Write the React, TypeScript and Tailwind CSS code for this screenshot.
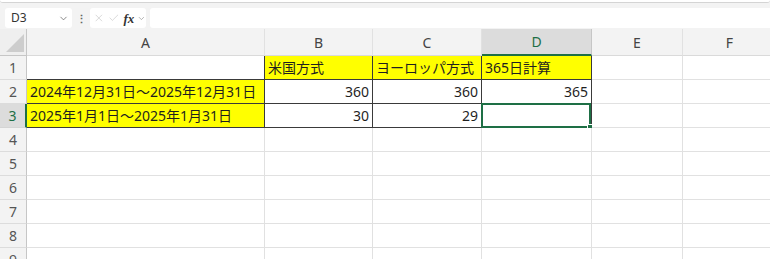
import { Check, ChevronDown, X } from 'lucide-react';

const cols = ['A', 'B', 'C', 'D', 'E', 'F'];
const rows = [1, 2, 3, 4, 5, 6, 7, 8, 9];

type Cell = { text?: string; yellow?: boolean; boxed?: boolean; right?: boolean };

// sheet data keyed by "row-col"
const cells: Record<string, Cell> = {
  '1-B': { text: '米国方式', yellow: true, boxed: true },
  '1-C': { text: 'ヨーロッパ方式', yellow: true, boxed: true },
  '1-D': { text: '365日計算', yellow: true, boxed: true },
  '2-A': { text: '2024年12月31日～2025年12月31日', yellow: true, boxed: true },
  '2-B': { text: '360', boxed: true, right: true },
  '2-C': { text: '360', boxed: true, right: true },
  '2-D': { text: '365', boxed: true, right: true },
  '3-A': { text: '2025年1月1日～2025年1月31日', yellow: true, boxed: true },
  '3-B': { text: '30', boxed: true, right: true },
  '3-C': { text: '29', boxed: true, right: true },
  '3-D': { boxed: true },
};

function SheetCell({ r, c }: { r: number; c: string }) {
  const cell = cells[`${r}-${c}`] ?? {};
  // A1 carries the top edge of A2 and the left edge of B1
  const a1 = r === 1 && c === 'A';
  const black = cell.boxed || a1;
  const selected = r === 3 && c === 'D';
  return (
    <div
      className={`relative flex items-end whitespace-nowrap border-r border-b px-[3px] pb-[2px] text-[14px] leading-[18px] text-[#1f1f1f] ${
        cell.yellow ? 'bg-[#ffff00]' : 'bg-white'
      } ${black ? 'border-[#3a3a3a]' : 'border-[#e1e1e1]'} ${cell.right ? 'justify-end' : 'justify-start'}`}
    >
      {cell.text}
      {selected && (
        <div className="pointer-events-none absolute -left-[1px] -top-[1px] h-[25px] w-[110px] border-2 border-[#1e6f45]">
          <div className="absolute -bottom-[4px] -right-[4px] h-[6px] w-[6px] border border-white bg-[#1e6f45]" />
        </div>
      )}
    </div>
  );
}

export default function App() {
  return (
    <div
      className="h-[259px] w-[770px] overflow-hidden bg-white"
      style={{ fontFamily: '"Noto Sans", "Noto Sans CJK JP", sans-serif' }}
    >
      {/* formula bar */}
      <div className="bg-[#f3f3f3]">
        <div className="h-[3px] rounded-b-md border-b border-[#d4d4d4] bg-white" />
        <div className="flex h-[26px] items-start gap-[4px] pl-[5px] pt-[5px]">
          <div className="flex h-[20px] w-[67px] items-center justify-between rounded-[3px] bg-white pl-[6px] pr-[3px] text-[12px] text-[#333]">
            <span>D3</span>
            <ChevronDown size={11} strokeWidth={1.5} className="text-[#555]" />
          </div>
          <div className="flex h-[20px] w-[10px] items-center justify-center text-[11px] font-bold leading-none text-[#666]">
            ⋮
          </div>
          <div className="flex h-[20px] w-[56px] items-center gap-[3px] rounded-[3px] bg-white pl-[3px] text-[#c4c4c4]">
            <X size={12} strokeWidth={1.3} />
            <Check size={12} strokeWidth={1.3} />
            <span
              className="ml-[1px] text-[13px] font-bold italic leading-none text-[#333]"
              style={{ fontFamily: '"Liberation Serif", serif' }}
            >
              fx
            </span>
            <ChevronDown size={9} strokeWidth={1.5} className="text-[#777]" />
          </div>
          <div className="h-[20px] flex-1 rounded-l-[3px] bg-white" />
        </div>
      </div>

      {/* sheet */}
      <div className="grid grid-cols-[27px_238px_108px_109px_110px_91px_94px_100px] grid-rows-[27px_repeat(9,24px)]">
        <div className="relative border-r border-b border-[#c6c6c6] bg-[#efefef]">
          <div className="absolute bottom-[3px] right-[2px] h-0 w-0 border-b-[18px] border-l-[18px] border-b-[#cdcdcd] border-l-transparent" />
        </div>
        {cols.map((c) => (
          <div
            key={c}
            className={`flex items-center justify-center border-r text-[14px] ${
              c === 'D'
                ? 'border-b-2 border-b-[#1e6f45] border-r-[#c6c6c6] bg-[#dcdcdc] text-[#1e6f45]'
                : 'border-b border-b-[#dadada] border-r-[#e1e1e1] bg-[#f3f3f3] text-[#444]'
            }`}
          >
            {c}
          </div>
        ))}
        <div className="border-b border-[#e1e1e1] bg-[#f3f3f3]" />

        {rows.map((r) => (
          <div key={r} className="contents">
            <div
              className={`flex items-center justify-center border-b text-[14px] ${
                r === 3
                  ? 'border-r-2 border-r-[#1e6f45] border-b-[#d4d4d4] bg-[#dcdcdc] text-[#1e6f45]'
                  : 'border-r border-r-[#c6c6c6] border-b-[#dcdcdc] bg-[#f3f3f3] text-[#555]'
              }`}
            >
              {r}
            </div>
            {cols.map((c) => (
              <SheetCell key={c} r={r} c={c} />
            ))}
            <div className="border-b border-[#e1e1e1] bg-white" />
          </div>
        ))}
      </div>
    </div>
  );
}
